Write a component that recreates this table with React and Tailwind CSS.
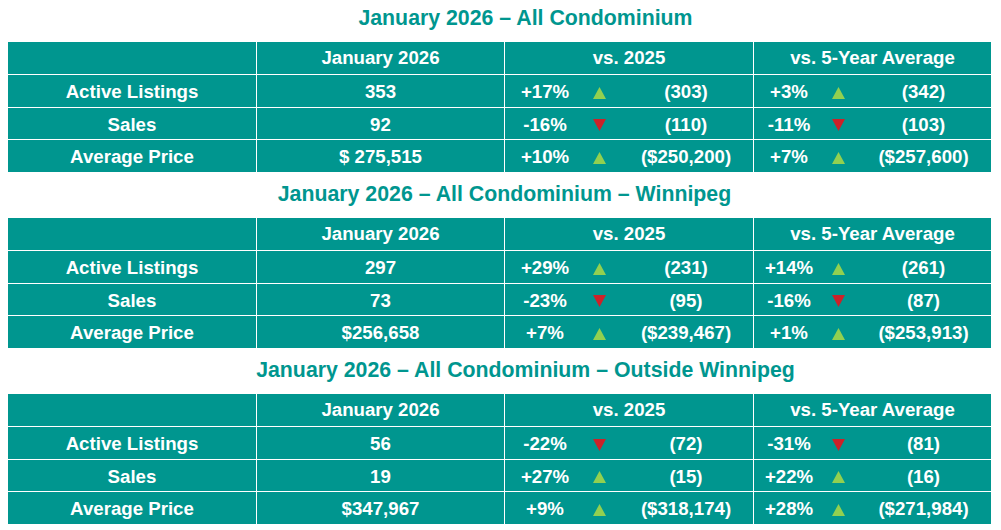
import React from "react";

const sections = [
  {
    title: "January 2026 – All Condominium",
    shift: true,
    rows: [
      ["Active Listings", "353", "+17%", "up", "(303)", "+3%", "up", "(342)"],
      ["Sales", "92", "-16%", "down", "(110)", "-11%", "down", "(103)"],
      ["Average Price", "$ 275,515", "+10%", "up", "($250,200)", "+7%", "up", "($257,600)"],
    ],
  },
  {
    title: "January 2026 – All Condominium – Winnipeg",
    shift: false,
    rows: [
      ["Active Listings", "297", "+29%", "up", "(231)", "+14%", "up", "(261)"],
      ["Sales", "73", "-23%", "down", "(95)", "-16%", "down", "(87)"],
      ["Average Price", "$256,658", "+7%", "up", "($239,467)", "+1%", "up", "($253,913)"],
    ],
  },
  {
    title: "January 2026 – All Condominium – Outside Winnipeg",
    shift: true,
    rows: [
      ["Active Listings", "56", "-22%", "down", "(72)", "-31%", "down", "(81)"],
      ["Sales", "19", "+27%", "up", "(15)", "+22%", "up", "(16)"],
      ["Average Price", "$347,967", "+9%", "up", "($318,174)", "+28%", "up", "($271,984)"],
    ],
  },
];

function Tri({ dir }) {
  return dir === "up" ? (
    <svg width="13" height="12" viewBox="0 0 13 12">
      <polygon points="6.5,0 13,12 0,12" fill="#92d050" />
    </svg>
  ) : (
    <svg width="13" height="12" viewBox="0 0 13 12">
      <polygon points="0,0 13,0 6.5,12" fill="#cc2229" />
    </svg>
  );
}

function Cell({ children, className = "" }) {
  return (
    <div className={"bg-[#00968f] flex items-center text-white " + className}>
      {children}
    </div>
  );
}

function Section({ s, first }) {
  return (
    <div className="flex flex-col">
      <div
        className={
          "flex items-center justify-center text-[#00968f] text-[21.3px] leading-none " +
          (first ? "h-[42px] pb-1 " : "h-[46px] ") +
          (s.shift ? "pl-[42px]" : "")
        }
      >
        {s.title}
      </div>
      <div className="grid grid-cols-[248px_247px_248px_237px] grid-rows-[32px_32px_31px_32px] gap-px bg-white">
        <Cell className="justify-center">{""}</Cell>
        <Cell className="justify-center">January 2026</Cell>
        <Cell className="justify-center">vs. 2025</Cell>
        <Cell className="justify-center">vs. 5-Year Average</Cell>
        {s.rows.map((r, i) => (
          <React.Fragment key={i}>
            <Cell className="justify-center pt-[3px]">{r[0]}</Cell>
            <Cell className="justify-center pt-[3px]">{r[1]}</Cell>
            <Cell className="pt-[3px]">
              <div className="w-[80px] text-center">{r[2]}</div>
              <div className="w-[28px] flex justify-center">
                <Tri dir={r[3]} />
              </div>
              <div className="flex-1 text-center pl-[6px]">{r[4]}</div>
            </Cell>
            <Cell className="pt-[3px]">
              <div className="w-[70px] text-center">{r[5]}</div>
              <div className="w-[28px] flex justify-center">
                <Tri dir={r[6]} />
              </div>
              <div className="flex-1 text-center pl-[4px]">{r[7]}</div>
            </Cell>
          </React.Fragment>
        ))}
      </div>
    </div>
  );
}

export default function App() {
  return (
    <div className="w-[1001px] h-[530px] bg-white pl-2 font-['Liberation_Sans',Arial,sans-serif] font-bold text-[18.67px] leading-none">
      {sections.map((s, i) => (
        <Section key={i} s={s} first={i === 0} />
      ))}
    </div>
  );
}
